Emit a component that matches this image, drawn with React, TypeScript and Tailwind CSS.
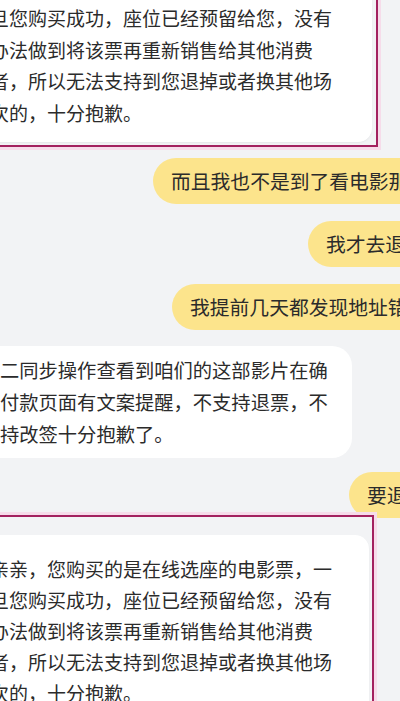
const REPLY_LINES = [
  "亲亲，您购买的是在线选座的电影票，一",
  "旦您购买成功，座位已经预留给您，没有",
  "办法做到将该票再重新销售给其他消费",
  "者，所以无法支持到您退掉或者换其他场",
  "次的，十分抱歉。",
];

const SYNC_LINES = [
  "二同步操作查看到咱们的这部影片在确",
  "付款页面有文案提醒，不支持退票，不",
  "持改签十分抱歉了。",
];

function YellowBubble({ text, left, top }: { text: string; left: string; top: string }) {
  return (
    <div className={`${left} ${top} flex h-[46px] w-max shrink-0 items-center whitespace-nowrap rounded-full bg-[#fce48c] px-[18px] text-[19.8px]`}>
      {text}
    </div>
  );
}

function ReplyCard({ lines, className }: { lines: string[]; className: string }) {
  return (
    <div className={`rounded-[14px] bg-white pl-[12px] shadow-[0_1px_2px_rgba(0,0,0,0.05)] ${className}`}>
      {lines.map((line) => (
        <div key={line} className="whitespace-nowrap">
          {line}
        </div>
      ))}
    </div>
  );
}

export default function App() {
  return (
    <div className="h-[701px] w-[400px] overflow-hidden bg-[#f2f3f5] font-['Noto_Sans_CJK_SC','Noto_Sans',sans-serif] text-[19px] text-[#2b2b2b]">
      <div className="flex flex-col">
        {/* marked reply, top */}
        <div className="-ml-[24px] -mt-[70px] w-[402px] shrink-0 border-2 border-[#a3215f] pb-[3px] pr-[4px] pt-[21.5px] shadow-[0_0_0_3px_#f6dcea]">
          <ReplyCard lines={REPLY_LINES} className="pb-[14px] pt-[17px] leading-[31.5px]" />
        </div>

        <YellowBubble text="而且我也不是到了看电影那天" left="ml-[153px]" top="mt-[11px]" />
        <YellowBubble text="我才去退的" left="ml-[308px]" top="mt-[17px]" />
        <YellowBubble text="我提前几天都发现地址错了" left="ml-[172px]" top="mt-[17px]" />

        <div className="-ml-[20px] mt-[16px] w-[372px] shrink-0 rounded-[20px] bg-white py-2 pl-[20px] text-[19.3px] leading-[32px]">
          {SYNC_LINES.map((line) => (
            <div key={line} className="whitespace-nowrap">
              {line}
            </div>
          ))}
        </div>

        <YellowBubble text="要退" left="ml-[349px]" top="mt-[14px]" />

        {/* marked reply, bottom */}
        <div className="relative z-10 -ml-[24px] -mt-[3px] w-[398px] shrink-0 border-2 border-[#a3215f] bg-[#f2f3f5] pr-[3px] pt-[18px] shadow-[0_0_0_3px_#f6dcea]">
          <ReplyCard lines={REPLY_LINES} className="pb-[14px] pt-[17.5px] leading-[31px]" />
        </div>
      </div>
    </div>
  );
}
